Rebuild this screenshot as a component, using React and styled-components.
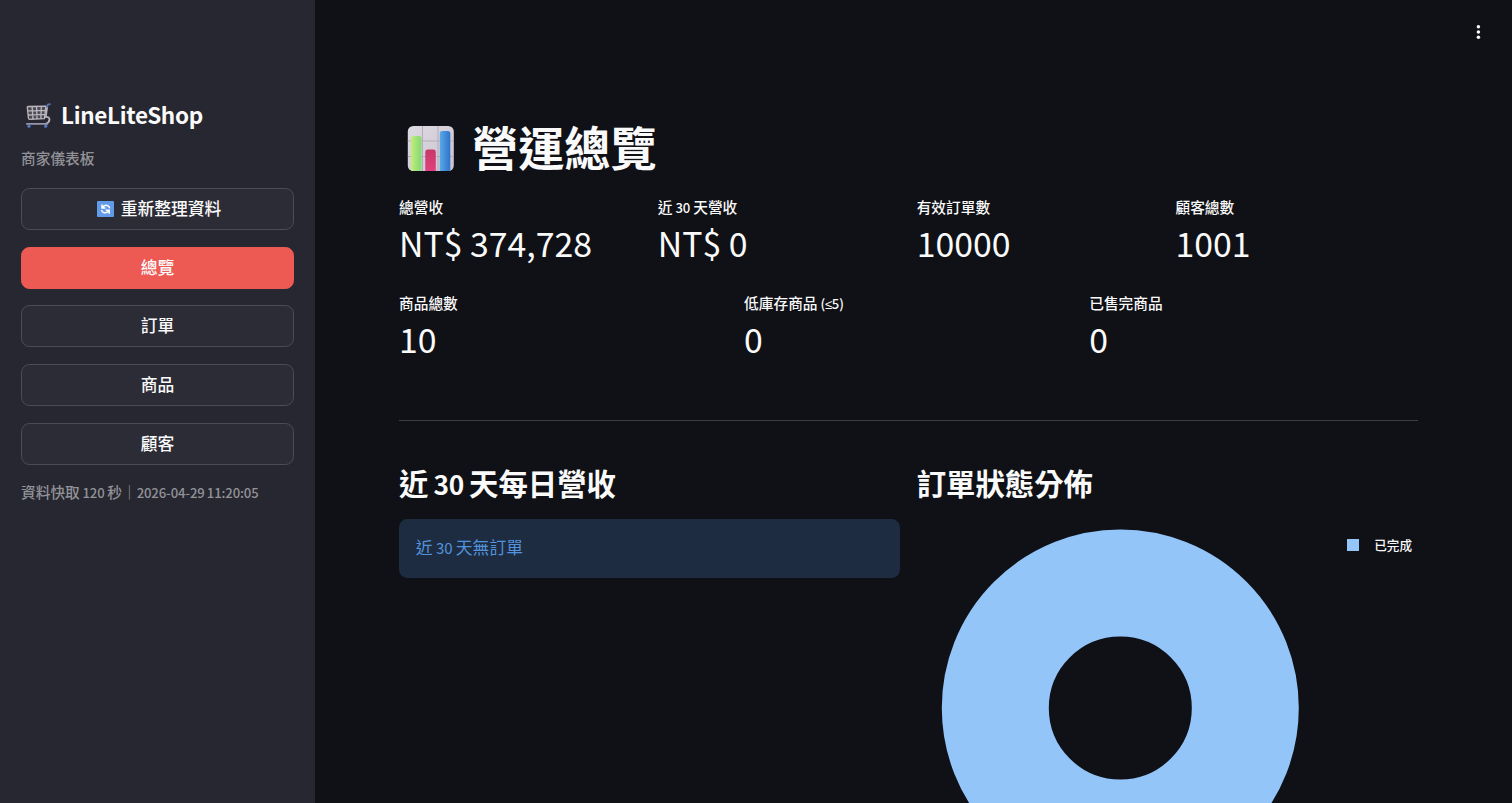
import React from 'react';
import styled, { createGlobalStyle } from 'styled-components';

const menu = ['總覽', '訂單', '商品', '顧客'];

const resumen = [
    { label: '總營收', value: 'NT$ 374,728' },
    { label: <>近 <Latin>30</Latin> 天營收</>, value: 'NT$ 0' },
    { label: '有效訂單數', value: '10000' },
    { label: '顧客總數', value: '1001' },
];

const inventario = [
    { label: '商品總數', value: '10' },
    { label: <>低庫存商品 <Latin>(<Symbol>≤</Symbol>5)</Latin></>, value: '0' },
    { label: '已售完商品', value: '0' },
];

// the CJK family draws its latin glyphs wider, so they go a bit smaller
function Latin({ children }) {
    return <LatinText>{children}</LatinText>;
}

// the CJK family has a full width sign here
function Symbol({ children }) {
    return <SymbolText>{children}</SymbolText>;
}

const CartIcon = () => (
    <svg width="27" height="26" viewBox="0 0 27 26" fill="none">
        <path d="M2.5 4.5Q2.2 3.6 3.2 3.5L20.6 3.2L19.4 15.4L4.6 16.2Q3.5 16.2 3.4 15Z" fill="#4c4a52" />
        <path d="M2.3 4.5Q2.2 3.6 3.2 3.5L21 3.2L19.4 15.6L4.8 16.4Q3.5 16.4 3.4 15Z M2.7 7.8L20.3 7.4 M3.1 12L19.8 11.4 M7.1 3.6L8 16 M11.6 3.6L12 16 M16.3 3.6L15.9 15.6" stroke="#bdb7bf" strokeWidth="1.3" strokeLinejoin="round" />
        <path d="M22.2 3.6L20.8 14Q24.5 13.6 24.5 16.6Q24.3 19.6 20.5 20.8" stroke="#b8b2bc" strokeWidth="1.8" strokeLinecap="round" strokeLinejoin="round" />
        <path d="M22.2 3.8L22.7 1.6L25 1.1" stroke="#5672ad" strokeWidth="1.8" strokeLinecap="round" strokeLinejoin="round" />
        <path d="M2 20.9H22.3" stroke="#9896ab" strokeWidth="1.9" strokeLinecap="round" />
        <circle cx="4" cy="23.2" r="1.6" fill="#5579c7" />
        <circle cx="20.7" cy="23.2" r="1.6" fill="#5579c7" />
    </svg>
);

const RefreshIcon = () => (
    <svg width="17" height="16" viewBox="0 0 17 16" fill="none">
        <rect width="17" height="16" rx="1" fill="#619bea" />
        <path d="M5 3.5V7H8.5 M5.3 6.6Q7.8 3.2 11 4.9Q12.5 5.8 12.6 7.2" stroke="#fff" strokeWidth="1.5" />
        <path d="M12.2 12.8V9.2H8.7 M11.8 9.7Q9.4 12.9 6.2 11.3Q4.7 10.4 4.6 9" stroke="#fff" strokeWidth="1.5" />
    </svg>
);

const ChartIcon = () => (
    <svg width="47" height="46" viewBox="0 0 47 46">
        <defs>
            <linearGradient id="fondo" x1="0" y1="0" x2="1" y2="1">
                <stop offset="0" stopColor="#dedae2" />
                <stop offset="1" stopColor="#c9c2d0" />
            </linearGradient>
            <linearGradient id="verde">
                <stop offset="0" stopColor="#c3ee7a" />
                <stop offset="1" stopColor="#83d875" />
            </linearGradient>
            <linearGradient id="rojo" x1="0" y1="0" x2="0" y2="1">
                <stop offset="0" stopColor="#c63868" />
                <stop offset="1" stopColor="#e33f80" />
            </linearGradient>
            <linearGradient id="azul">
                <stop offset="0" stopColor="#5aa9ea" />
                <stop offset="1" stopColor="#2f74c8" />
            </linearGradient>
            <clipPath id="marco"><rect x="0.8" width="46" height="45" rx="5.5" /></clipPath>
        </defs>
        <g clipPath="url(#marco)">
            <rect width="47" height="46" fill="url(#fondo)" />
            <path d="M0 15H47M0 30.5H47M15.5 0V46M31 0V46" stroke="#b3adb9" strokeWidth="1" />
            <path d="M4 46V12.5Q4 10 6.5 10H12Q14.5 10 14.5 12.5V46Z" fill="url(#verde)" />
            <path d="M18.3 46V26Q18.3 23.5 20.8 23.5H26.3Q28.8 23.5 28.8 26V46Z" fill="url(#rojo)" />
            <path d="M32.8 46V7.5Q32.8 5 35.3 5H40.8Q43.3 5 43.3 7.5V46Z" fill="url(#azul)" />
        </g>
    </svg>
);

const Metricas = ({ items }) => (
    <Grid $cols={items.length}>
        {items.map((item, i) => (
            <div key={i}>
                <MetricLabel>{item.label}</MetricLabel>
                <MetricValue>{item.value}</MetricValue>
            </div>
        ))}
    </Grid>
);

const App = () => {
    return (
        <>
            <GlobalStyle />
            <Layout>
                <Sidebar>
                    <Brand><CartIcon />LineLiteShop</Brand>
                    <Caption>商家儀表板</Caption>
                    <Nav>
                        <Button><RefreshIcon />重新整理資料</Button>
                        {menu.map((item) => (
                            <Button key={item} $active={item === '總覽'}>{item}</Button>
                        ))}
                    </Nav>
                    <Caption $last>資料快取 <Latin>120</Latin> 秒｜<Latin>2026-04-29 11:20:05</Latin></Caption>
                </Sidebar>
                <Main>
                    <Header>
                        <MenuButton aria-label="menu">
                            <svg width="6" height="16" viewBox="0 0 6 16" fill="#fafafa">
                                <circle cx="3.4" cy="2.8" r="1.75" />
                                <circle cx="3.4" cy="8" r="1.75" />
                                <circle cx="3.4" cy="13.2" r="1.75" />
                            </svg>
                        </MenuButton>
                    </Header>
                    <Content>
                        <Title><ChartIcon /><TitleText>營運總覽</TitleText></Title>
                        <Metricas items={resumen} />
                        <Metricas items={inventario} />
                        <Divider />
                        <Grid $cols={2}>
                            <div>
                                <Subtitle>近 <Latin>30</Latin> 天每日營收</Subtitle>
                                <Info>近 <Latin>30</Latin> 天無訂單</Info>
                            </div>
                            <div>
                                <Subtitle>訂單狀態分佈</Subtitle>
                                <Chart>
                                    <svg width="358" height="358" viewBox="0 0 358 358">
                                        <circle cx="179.3" cy="179" r="125" fill="none" stroke="#93c5f9" strokeWidth="107" />
                                    </svg>
                                    <Legend><Swatch />已完成</Legend>
                                </Chart>
                            </div>
                        </Grid>
                    </Content>
                </Main>
            </Layout>
        </>
    );
}

const GlobalStyle = createGlobalStyle`
    *{
        box-sizing: border-box;
    }
    body{
        margin: 0;
        overflow: hidden;
        background: #0f1116;
        color: #fafafa;
        font-family: "Noto Sans CJK TC", sans-serif;
        font-size: 16.8px;
    }
    svg{
        display: block;
        flex: none;
    }
`;

const LatinText = styled.span`
    font-size: 0.895em;
    line-height: 1;
    letter-spacing: -0.01em;
`;

const SymbolText = styled.span`
    font-family: "Noto Sans", sans-serif;
    letter-spacing: -0.04em;
`;

const Layout = styled.div`
    display: flex;
    height: 803px;
    overflow: hidden;
`;

const Sidebar = styled.aside`
    width: 315px;
    flex: none;
    padding: 97px 21px 0;
    background: #262730;
`;

const Brand = styled.div`
    display: flex;
    align-items: center;
    gap: 9px;
    height: 36px;
    padding: 0 0 1px 4px;
    font-size: 22.5px;
    line-height: 33px;
    letter-spacing: -0.33px;
    font-weight: 600;
    white-space: nowrap;

    svg{
        margin-top: 3px;
    }
`;

const Caption = styled.div`
    margin-top: ${({ $last }) => ($last ? '15px' : '13px')};
    font-size: 14.7px;
    line-height: 23px;
    color: #929298;
    font-weight: 500;
    word-spacing: -0.04em;
    white-space: nowrap;
`;

const Nav = styled.nav`
    display: flex;
    flex-direction: column;
    gap: 16.8px;
    margin-top: 18.8px;
`;

const Button = styled.button`
    display: flex;
    align-items: center;
    justify-content: center;
    gap: 7px;
    height: 42px;
    padding: 0 0 2px;
    border: 1px solid ${({ $active }) => ($active ? '#ed5a53' : '#4b4c55')};
    border-radius: 8.4px;
    background: ${({ $active }) => ($active ? '#ed5a53' : '#2b2c36')};
    color: #fafafa;
    font-family: inherit;
    font-size: 16.8px;
    font-weight: 500;
    line-height: 24px;

    svg{
        margin: 2px 0 0 3px;
    }
`;

const Main = styled.main`
    flex: 1;
    min-width: 0;
`;

const Header = styled.header`
    display: flex;
    justify-content: flex-end;
    align-items: center;
    height: 63px;
    padding-right: 30.7px;
`;

const MenuButton = styled.button`
    padding: 0;
    border: 0;
    background: none;
`;

const Content = styled.div`
    width: 1102.5px;
    padding: 55px 0 0 84px;
`;

const Title = styled.h1`
    display: flex;
    align-items: center;
    gap: 18px;
    height: 62px;
    margin: 0 0 15px;
    padding-left: 8px;
    font-size: 46.2px;
    font-weight: 700;

    svg{
        margin-bottom: 1px;
    }
`;

const TitleText = styled.span`
    line-height: 62px;
    padding-bottom: 7px;
`;

const Grid = styled.div`
    display: grid;
    grid-template-columns: repeat(${({ $cols }) => $cols}, minmax(0, 1fr));
    column-gap: 16.8px;
`;

const MetricLabel = styled.div`
    font-size: 14.7px;
    line-height: 23px;
    font-weight: 500;
    word-spacing: -0.02em;
    white-space: nowrap;
`;

const MetricValue = styled.div`
    height: 73px;
    font-size: 33.8px;
    line-height: 50px;
`;

const Divider = styled.hr`
    height: 1px;
    margin: 33px 0 31px;
    border: 0;
    background: #3d3e43;
`;

const Subtitle = styled.h3`
    height: 60px;
    margin: 0 0 7px;
    font-size: 29.4px;
    line-height: 60px;
    font-weight: 700;
    word-spacing: -0.05em;
    white-space: nowrap;

    ${LatinText}{
        letter-spacing: -0.015em;
    }
`;

const Info = styled.div`
    height: 59px;
    padding: 0 16.8px;
    border-radius: 8.4px;
    background: #1e2c42;
    color: #5193dc;
    line-height: 56px;
    word-spacing: -0.02em;
`;

const Chart = styled.div`
    display: flex;
    justify-content: space-between;
    align-items: flex-start;
    padding: 10px 5.5px 0 24.7px;
`;

const Legend = styled.div`
    display: flex;
    align-items: center;
    gap: 15px;
    margin-top: 6px;
    font-size: 12.6px;
    line-height: 20px;
    font-weight: 500;
`;

const Swatch = styled.span`
    width: 12.6px;
    height: 12.6px;
    background: #93c5f9;
`;

export default App;
